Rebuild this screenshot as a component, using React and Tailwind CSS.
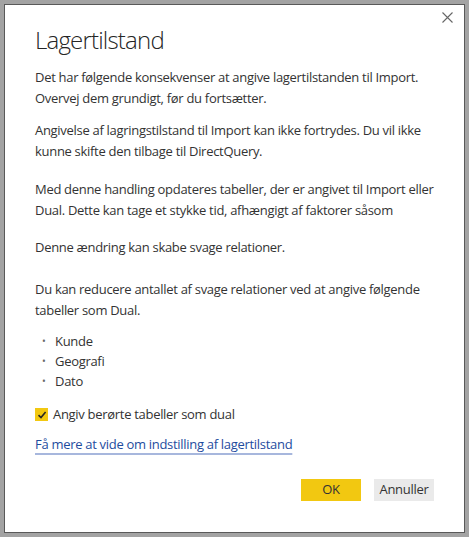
export default function App() {
  return (
    <div className="w-[469px] h-[537px] bg-[#a3a3a3] p-1" style={{ fontFamily: '"Open Sans", "Noto Sans", sans-serif' }}>
      <div className="relative h-full border border-[#595959] bg-white pl-[30px] pr-[20px] pt-[19px] text-[13px] tracking-[-0.3px] text-[#333333]">
        <button className="absolute right-[11px] top-[7px] text-[#666666]">
          <svg width="11" height="11" viewBox="0 0 11 11" fill="none" stroke="currentColor" strokeWidth="1.1">
            <path d="M0.5 0.5 L10.5 10.5 M10.5 0.5 L0.5 10.5" />
          </svg>
        </button>

        <h1 className="text-[24px] leading-[32px] font-light tracking-[-0.8px] text-[#252525]">Lagertilstand</h1>

        <div className="leading-[21px]">
          <p className="mt-[11px]">Det har følgende konsekvenser at angive lagertilstanden til Import. Overvej dem grundigt, før du fortsætter.</p>
          <p className="mt-[11px]">Angivelse af lagringstilstand til Import kan ikke fortrydes. Du vil ikke kunne skifte den tilbage til DirectQuery.</p>
          <p className="mt-[17px]">Med denne handling opdateres tabeller, der er angivet til Import eller Dual. Dette kan tage et stykke tid, afhængigt af faktorer såsom</p>
          <p className="mt-[16px]">Denne ændring kan skabe svage relationer.</p>
          <p className="mt-[21px]">Du kan reducere antallet af svage relationer ved at angive følgende tabeller som Dual.</p>
        </div>

        <ul className="mt-[10px] leading-[20px]">
          {["Kunde", "Geografi", "Dato"].map((t) => (
            <li key={t} className="flex items-center">
              <span className="w-[20px] pl-[7px] text-[#666666] text-[10px]">•</span>
              <span>{t}</span>
            </li>
          ))}
        </ul>

        <label className="mt-[13px] flex items-center gap-[5px] leading-[21px]">
          <span className="flex h-[13px] w-[13px] items-center justify-center bg-[#f2c811]">
            <svg width="10" height="10" viewBox="0 0 10 10" fill="none" stroke="#252525" strokeWidth="1.6">
              <path d="M1.5 5.2 L4 7.6 L8.6 2" />
            </svg>
          </span>
          <span>Angiv berørte tabeller som dual</span>
        </label>

        <a className="mt-[9px] block w-fit leading-[21px] text-[#1e4c9e] underline decoration-[#a7b7dd] decoration-[1.5px] underline-offset-[4px]">
          Få mere at vide om indstilling af lagertilstand
        </a>

        <div className="mt-[24px] flex justify-end gap-[13px] pr-[10px]">
          <button className="h-[22px] w-[60px] bg-[#f2c811] text-[13px] text-[#333333]">OK</button>
          <button className="h-[22px] w-[60px] bg-[#eaeaea] text-[13px] text-[#333333]">Annuller</button>
        </div>
      </div>
    </div>
  );
}
